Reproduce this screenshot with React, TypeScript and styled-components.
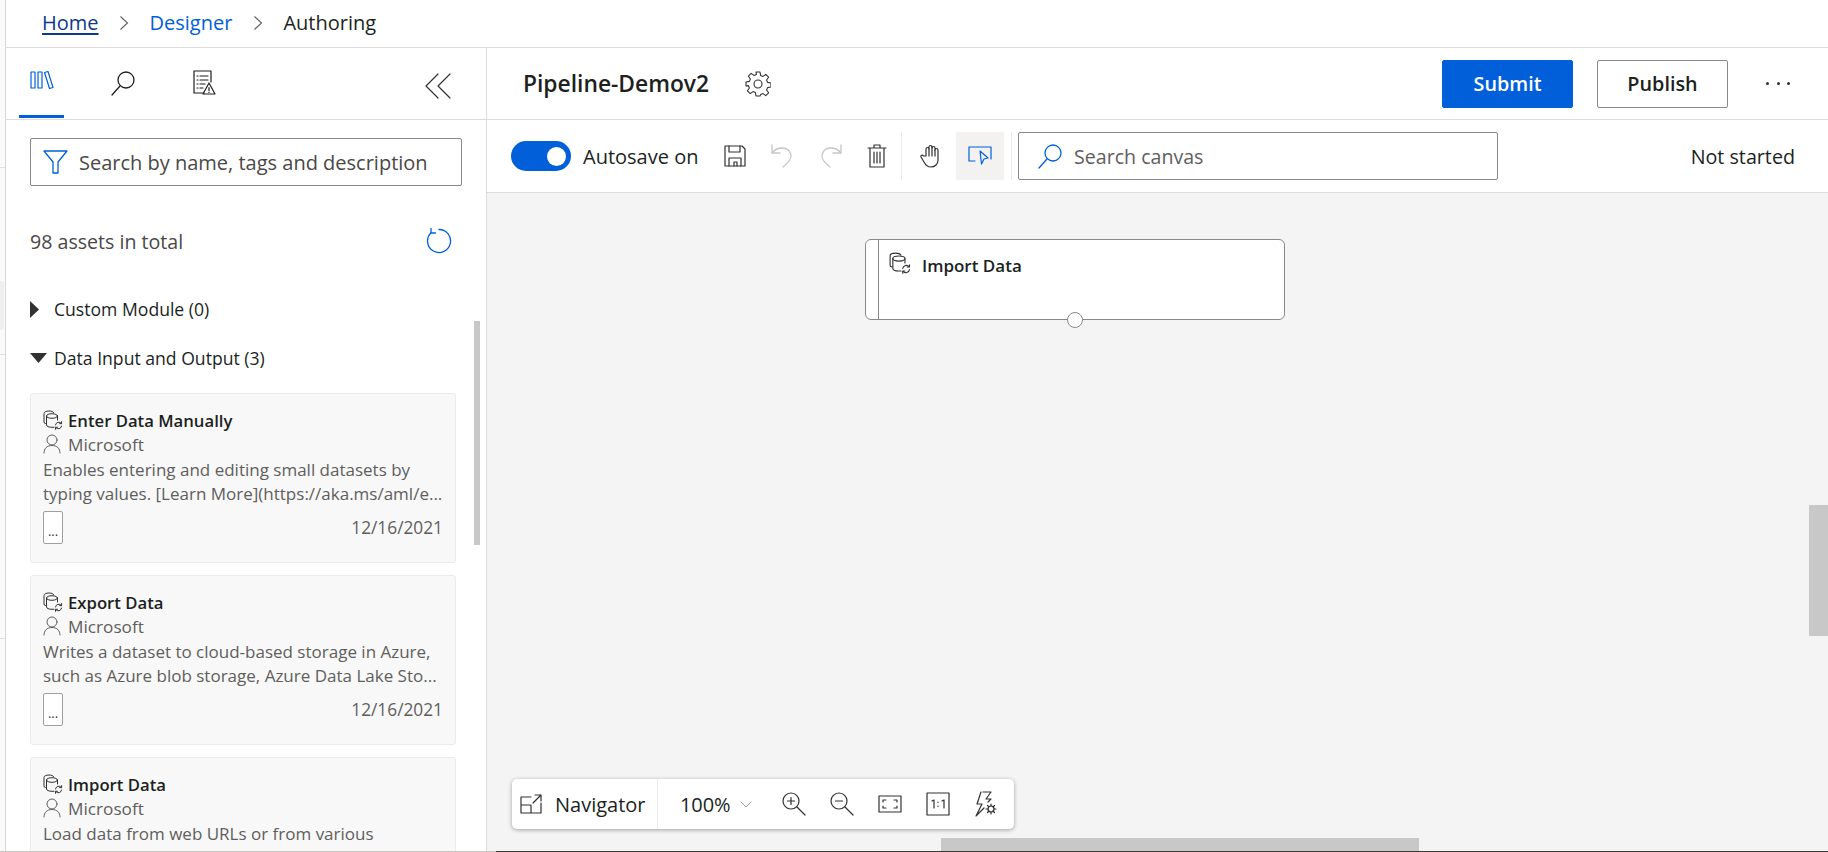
import React from 'react';
import styled, { createGlobalStyle } from 'styled-components';

const GlobalStyle = createGlobalStyle`
  html, body {
    margin: 0;
    padding: 0;
    background: #fff;
  }
  * {
    box-sizing: border-box;
  }
  body {
    font-family: 'Open Sans', 'Noto Sans', 'Liberation Sans', sans-serif;
    color: #201f1e;
  }
`;

const Page = styled.div`
  position: relative;
  display: flex;
  width: 1828px;
  height: 852px;
  overflow: hidden;
  background: #fff;
`;

const LeftStrip = styled.div`
  width: 6px;
  flex: none;
  display: flex;
  flex-direction: column;
  background: #fafafa;
  border-right: 1px solid #d6d6d6;
`;

const StripRule = styled.div<{ $top: number }>`
  height: 1px;
  margin-top: ${(p) => p.$top}px;
  background: #e1dfdd;
`;

const StripBlock = styled.div<{ $top: number }>`
  width: 4px;
  height: 49px;
  margin-top: ${(p) => p.$top}px;
  background: #efefef;
  border-radius: 0 3px 3px 0;
`;

const Main = styled.div`
  flex: 1;
  min-width: 0;
  display: flex;
  flex-direction: column;
`;

const Breadcrumb = styled.nav`
  height: 48px;
  flex: none;
  display: flex;
  align-items: center;
  padding: 0 0 2px 36px;
  border-bottom: 1px solid #dcdcdc;
  font-size: 20px;
`;

const Crumb = styled.a<{ $kind: 'home' | 'link' | 'current' }>`
  color: ${(p) => (p.$kind === 'home' ? '#0b3a8a' : p.$kind === 'link' ? '#0160d9' : '#201f1e')};
  text-decoration: ${(p) => (p.$kind === 'home' ? 'underline' : 'none')};
  text-underline-offset: 3px;
`;

const CrumbChevron = styled.svg`
  width: 10px;
  height: 16px;
  margin: 0 20.5px;
  fill: none;
  stroke: #605e5c;
  stroke-width: 1.1;
`;

const Body = styled.div`
  flex: 1;
  min-height: 0;
  display: flex;
`;

const Sidebar = styled.aside`
  position: relative;
  width: 481px;
  flex: none;
  overflow: hidden;
  border-right: 1px solid #dcdcdc;
`;

const TabRow = styled.div`
  height: 72px;
  display: flex;
  align-items: stretch;
  padding: 0 35px 0 13px;
  border-bottom: 1px solid #dcdcdc;
`;

const Tab = styled.div<{ $active?: boolean }>`
  width: 45px;
  margin-right: 36px;
  display: flex;
  align-items: flex-start;
  justify-content: center;
  padding-top: 22px;
  height: 70px;
  border-bottom: 3px solid ${(p) => (p.$active ? '#0160d9' : 'transparent')};
`;

const Collapse = styled.div`
  margin-left: auto;
  padding-top: 25px;
`;

const SidebarBody = styled.div`
  padding: 18px 30px 0 24px;
`;

const FilterBox = styled.div`
  height: 48px;
  width: 432px;
  display: flex;
  align-items: center;
  gap: 11px;
  padding-left: 12px;
  border: 1px solid #8a8886;
  border-radius: 2px;
  font-size: 20px;
  white-space: nowrap;
  color: #4a4846;
`;

const AssetsRow = styled.div`
  height: 40px;
  margin-top: 35px;
  width: 422px;
  display: flex;
  align-items: center;
  justify-content: space-between;
  font-size: 19.6px;
  color: #4a4846;
`;

const GroupRow = styled.div<{ $gap: number }>`
  height: 24px;
  margin-top: ${(p) => p.$gap}px;
  display: flex;
  align-items: center;
  font-size: 17.6px;
  font-weight: 500;
  color: #201f1e;
`;

const CaretBox = styled.div`
  width: 24px;
  flex: none;
  display: flex;
`;

const CardList = styled.div`
  margin-top: 23px;
  display: flex;
  flex-direction: column;
  gap: 12px;
`;

const Card = styled.div`
  width: 426px;
  height: 170px;
  flex: none;
  padding: 14px 12px 0 12px;
  background: #f8f8f8;
  border: 1px solid #edebe9;
  border-radius: 3px;
`;

const CardLine = styled.div`
  height: 24px;
  display: flex;
  align-items: center;
  gap: 6px;
`;

const CardTitle = styled.span`
  margin-left: -1px;
  font-size: 16.7px;
  font-weight: 600;
  color: #201f1e;
`;

const Owner = styled.span`
  margin-left: 1px;
  font-size: 17.2px;
  color: #605e5c;
`;

const Description = styled.div`
  margin-top: 2px;
  font-size: 17px;
  line-height: 24px;
  color: #605e5c;
  white-space: nowrap;
`;

const CardFoot = styled.div`
  display: flex;
  align-items: center;
  justify-content: space-between;
  margin-top: 5px;
`;

const MoreChip = styled.div`
  width: 20px;
  height: 33px;
  display: flex;
  align-items: center;
  justify-content: center;
  padding-top: 6px;
  background: #fff;
  border: 1px solid #a19f9d;
  border-radius: 2px;
  font-size: 13px;
  color: #323130;
`;

const DateText = styled.span`
  font-size: 17.3px;
  color: #605e5c;
`;

const SidebarThumb = styled.div`
  position: absolute;
  left: 468px;
  top: 273px;
  width: 6px;
  height: 224px;
  background: #c8c8c8;
`;

const Workspace = styled.main`
  flex: 1;
  min-width: 0;
  display: flex;
  flex-direction: column;
`;

const Header = styled.header`
  height: 72px;
  flex: none;
  display: flex;
  align-items: center;
  padding: 0 38px 0 36px;
  border-bottom: 1px solid #dcdcdc;
`;

const PipelineName = styled.h1`
  margin: 0 36px 0 0;
  font-size: 22.8px;
  font-weight: 600;
  color: #201f1e;
`;

const HeaderActions = styled.div`
  margin-left: auto;
  display: flex;
  align-items: center;
  gap: 24px;
`;

const ActionButton = styled.button<{ $primary?: boolean }>`
  width: 131px;
  height: 48px;
  font: inherit;
  font-size: 19.8px;
  font-weight: 600;
  border-radius: 2px;
  color: ${(p) => (p.$primary ? '#fff' : '#201f1e')};
  background: ${(p) => (p.$primary ? '#0160d9' : '#fff')};
  border: 1px solid ${(p) => (p.$primary ? '#0160d9' : '#8a8886')};
`;

const MoreDots = styled.div`
  width: 24px;
  margin-left: 14px;
  display: flex;
  justify-content: space-between;
  span {
    width: 3px;
    height: 3px;
    border-radius: 50%;
    background: #323130;
  }
`;

const Toolbar = styled.div`
  height: 73px;
  flex: none;
  display: flex;
  align-items: center;
  padding: 0 33px 0 24px;
  border-bottom: 1px solid #dcdcdc;
`;

const Toggle = styled.div`
  width: 60px;
  height: 30px;
  padding: 0 5px;
  display: flex;
  align-items: center;
  justify-content: flex-end;
  border-radius: 15px;
  background: #0160d9;
  margin-right: 12px;
  &::after {
    content: '';
    width: 19px;
    height: 19px;
    border-radius: 50%;
    background: #fff;
  }
`;

const ToolLabel = styled.span`
  font-size: 20px;
  color: #201f1e;
  width: 129px;
  white-space: nowrap;
`;

const ToolButton = styled.div<{ $width: number; $active?: boolean }>`
  width: ${(p) => p.$width}px;
  height: 48px;
  display: flex;
  align-items: center;
  justify-content: center;
  border-radius: 2px;
  background: ${(p) => (p.$active ? '#f3f2f1' : 'transparent')};
`;

const ToolDivider = styled.div<{ $left: number; $right: number }>`
  width: 1px;
  height: 48px;
  background: #edebe9;
  margin: 0 ${(p) => p.$right}px 0 ${(p) => p.$left}px;
`;

const CanvasSearch = styled.div`
  width: 480px;
  height: 48px;
  display: flex;
  align-items: center;
  gap: 11px;
  padding-left: 18px;
  border: 1px solid #8a8886;
  border-radius: 2px;
  font-size: 19.6px;
  color: #605e5c;
`;

const RunStatus = styled.span`
  margin-left: auto;
  font-size: 19.7px;
  color: #201f1e;
`;

const Canvas = styled.div`
  position: relative;
  flex: 1;
  min-height: 0;
  background: #f4f4f4;
`;

const Node = styled.div`
  position: absolute;
  left: 378px;
  top: 46px;
  width: 420px;
  height: 81px;
  display: flex;
  padding-left: 12px;
  background: #fff;
  border: 1.5px solid #8a8886;
  border-radius: 6px;
`;

const NodeBody = styled.div`
  flex: 1;
  display: flex;
  align-items: flex-start;
  gap: 11px;
  padding: 12px 0 0 10px;
  border-left: 1.5px solid #8a8886;
  font-size: 17px;
  font-weight: 600;
  line-height: 27px;
  color: #201f1e;
`;

const NodePort = styled.div`
  position: absolute;
  left: 201px;
  bottom: -9px;
  width: 16px;
  height: 16px;
  border-radius: 50%;
  background: #fff;
  border: 1.5px solid #8a8886;
`;

const Navigator = styled.div`
  position: absolute;
  left: 25px;
  bottom: 23px;
  width: 502px;
  height: 50px;
  display: flex;
  align-items: center;
  background: #fff;
  border-radius: 5px;
  box-shadow: 0 1px 4px rgba(0, 0, 0, 0.35);
`;

const NavLabel = styled.div`
  width: 146px;
  height: 100%;
  flex: none;
  display: flex;
  align-items: center;
  gap: 13px;
  padding-left: 8px;
  border-right: 1px solid #edebe9;
  font-size: 20px;
  color: #201f1e;
`;

const ZoomValue = styled.div`
  width: 112px;
  flex: none;
  display: flex;
  align-items: center;
  gap: 10px;
  padding-left: 22px;
  font-size: 20px;
  letter-spacing: -0.1px;
  color: #201f1e;
`;

const NavIcon = styled.div`
  width: 48px;
  flex: none;
  display: flex;
  justify-content: center;
`;

const CanvasThumbV = styled.div`
  position: absolute;
  right: 0;
  top: 312px;
  width: 19px;
  height: 131px;
  background: #c8c8c8;
`;

const CanvasThumbH = styled.div`
  position: absolute;
  left: 454px;
  bottom: 1px;
  width: 478px;
  height: 13px;
  background: #c8c8c8;
`;

const BottomEdge = styled.div`
  position: absolute;
  left: 0;
  right: 0;
  bottom: 0;
  height: 1px;
  background: linear-gradient(to right, #c8c6c4 0 496px, #3b3a39 496px);
`;

const Icon = styled.svg`
  display: block;
  flex: none;
  fill: none;
  stroke-linecap: round;
  stroke-linejoin: round;
`;

const DARK = '#323130';
const BLUE = '#0160d9';

const DatasetIcon = ({ size = 20 }: { size?: number }) => (
  <Icon width={size} height={size} viewBox="0 0 20 20" stroke={DARK} strokeWidth="1">
    <path d="M3 13.5H2.600A1.600 1.600 0 0 1 1 12V3.500C1 2 3 1 6 1c2.400 0 4.200.7 4.800 1.800" />
    <ellipse cx="9" cy="6" rx="5.500" ry="2.300" />
    <path d="M3.500 6v9c0 1.300 2.300 2.300 5.500 2.300h2M14.500 6v4" />
    <path d="M12.500 15a3.300 3.300 0 0 1 5.800-1.600M18.600 16a3.300 3.300 0 0 1-5.800 1.600" />
    <path d="M18.600 11.600v2h-2M12.500 19.300v-2h2" />
  </Icon>
);

const PersonIcon = () => (
  <Icon width={18} height={20} viewBox="0 0 18 20" stroke="#605e5c" strokeWidth="1">
    <circle cx="9" cy="6" r="5" />
    <path d="M1 19c0-4.500 3-7.500 8-7.500s8 3 8 7.500" />
  </Icon>
);

const AssetCard = ({ title, lines }: { title: string; lines: string[] }) => (
  <Card>
    <CardLine>
      <DatasetIcon />
      <CardTitle>{title}</CardTitle>
    </CardLine>
    <CardLine>
      <PersonIcon />
      <Owner>Microsoft</Owner>
    </CardLine>
    <Description>
      {lines.map((l) => (
        <div key={l}>{l}</div>
      ))}
    </Description>
    <CardFoot>
      <MoreChip>...</MoreChip>
      <DateText>12/16/2021</DateText>
    </CardFoot>
  </Card>
);

export default function App() {
  return (
    <Page>
      <GlobalStyle />
      <LeftStrip>
        <StripRule $top={167} />
        <StripBlock $top={113} />
        <StripRule $top={24} />
        <StripRule $top={283} />
      </LeftStrip>
      <Main>
        <Breadcrumb>
          <Crumb $kind="home">Home</Crumb>
          <CrumbChevron viewBox="0 0 10 16"><path d="M1.500 1.500 8.500 8l-7 6.500" /></CrumbChevron>
          <Crumb $kind="link">Designer</Crumb>
          <CrumbChevron viewBox="0 0 10 16"><path d="M1.500 1.500 8.500 8l-7 6.500" /></CrumbChevron>
          <Crumb $kind="current">Authoring</Crumb>
        </Breadcrumb>
        <Body>
          <Sidebar>
            <TabRow>
              <Tab $active>
                <Icon width={24} height={20} viewBox="0 0 24 20" stroke={BLUE} strokeWidth="1.200">
                  <rect x="1" y="2" width="4" height="16" />
                  <rect x="8" y="2" width="4" height="16" />
                  <path d="m14.500 2.500 3.500-1 5 16-3.500 1z" />
                </Icon>
              </Tab>
              <Tab>
                <Icon width={26} height={26} viewBox="0 0 26 26" stroke="#201f1e" strokeWidth="1.300">
                  <circle cx="16" cy="10" r="8" />
                  <path d="M10 16 2 25" />
                </Icon>
              </Tab>
              <Tab>
                <Icon width={24} height={26} viewBox="0 0 24 26" stroke="#201f1e" strokeWidth="1.200">
                  <path d="M12 23H2V1h17v11" />
                  <path d="M5 6h1M8 6h8M5 10h1M8 10h8M5 14h1M8 14h5M5 18h1M8 18h3" />
                  <path d="m17 13 6 11H11z" />
                  <path d="M17 17.500v3M17 22v.4" />
                </Icon>
              </Tab>
              <Collapse>
                <Icon width={26} height={26} viewBox="0 0 26 26" stroke="#323130" strokeWidth="1.200">
                  <path d="M13 1 1 13l12 12M25 1 13 13l12 12" />
                </Icon>
              </Collapse>
            </TabRow>
            <SidebarBody>
              <FilterBox>
                <Icon width={25} height={24} viewBox="0 0 25 24" stroke={BLUE} strokeWidth="1.300">
                  <path d="M1 1h23l-9 11v11h-5V12z" />
                </Icon>
                Search by name, tags and description
              </FilterBox>
              <AssetsRow>
                98 assets in total
                <Icon width={26} height={26} viewBox="0 0 26 26" stroke={BLUE} strokeWidth="1.300">
                  <path d="M13 1.500A11.500 11.500 0 1 1 4.900 4.900" />
                  <path d="M5 .5V5h4.500" />
                </Icon>
              </AssetsRow>
              <GroupRow $gap={36}>
                <CaretBox>
                  <svg width="9" height="17" viewBox="0 0 9 17"><path d="M0 0 9 8.500 0 17z" fill="#323130" /></svg>
                </CaretBox>
                Custom Module (0)
              </GroupRow>
              <GroupRow $gap={25}>
                <CaretBox>
                  <svg width="17" height="10" viewBox="0 0 17 10"><path d="M0 0h17L8.500 10z" fill="#323130" /></svg>
                </CaretBox>
                Data Input and Output (3)
              </GroupRow>
              <CardList>
                <AssetCard
                  title="Enter Data Manually"
                  lines={[
                    'Enables entering and editing small datasets by',
                    'typing values. [Learn More](https://aka.ms/aml/e...',
                  ]}
                />
                <AssetCard
                  title="Export Data"
                  lines={[
                    'Writes a dataset to cloud-based storage in Azure,',
                    'such as Azure blob storage, Azure Data Lake Sto...',
                  ]}
                />
                <AssetCard
                  title="Import Data"
                  lines={['Load data from web URLs or from various', 'cloud-based storage services in Azure, such...']}
                />
              </CardList>
            </SidebarBody>
            <SidebarThumb />
          </Sidebar>
          <Workspace>
            <Header>
              <PipelineName>Pipeline-Demov2</PipelineName>
              <Icon width={26} height={26} viewBox="0 0 26 26" stroke="#323130" strokeWidth="1.100">
                <circle cx="13" cy="13" r="4" />
                <path d="M11 1h4l.6 3.400 2.400 1 2.800-2 2.800 2.800-2 2.800 1 2.400 3.400.6v4l-3.400.6-1 2.400 2 2.800-2.800 2.800-2.800-2-2.400 1L15 25h-4l-.6-3.400-2.400-1-2.800 2-2.800-2.800 2-2.800-1-2.400L1 15v-4l3.400-.6 1-2.400-2-2.800L6.200 2.400l2.800 2 2.400-1z" />
              </Icon>
              <HeaderActions>
                <ActionButton $primary>Submit</ActionButton>
                <ActionButton>Publish</ActionButton>
                <MoreDots><span /><span /><span /></MoreDots>
              </HeaderActions>
            </Header>
            <Toolbar>
              <Toggle />
              <ToolLabel>Autosave on</ToolLabel>
              <ToolButton $width={46}>
                <Icon width={22} height={22} viewBox="0 0 22 22" stroke={DARK} strokeWidth="1.200">
                  <path d="M1 1h17l3 3v17H1z" />
                  <path d="M5 1v6h11V1M5 21v-8h12v8M10 21v-4h3v4" />
                </Icon>
              </ToolButton>
              <ToolButton $width={48}>
                <Icon width={22} height={24} viewBox="0 0 22 24" stroke="#c8c6c4" strokeWidth="1.300">
                  <path d="M1 1v8h8" />
                  <path d="M1 9c4-6 17-8 19 2 .8 4-3 8-8 12" />
                </Icon>
              </ToolButton>
              <ToolButton $width={50}>
                <Icon width={22} height={24} viewBox="0 0 22 24" stroke="#c8c6c4" strokeWidth="1.300">
                  <path d="M21 1v8h-8" />
                  <path d="M21 9C17 3 4 1 2 11c-.8 4 3 8 8 12" />
                </Icon>
              </ToolButton>
              <ToolButton $width={42}>
                <Icon width={20} height={24} viewBox="0 0 20 24" stroke={DARK} strokeWidth="1.200">
                  <path d="M1 4h18M7 4V1h6v3M3 4v19h14V4M7 8v11M10 8v11M13 8v11" />
                </Icon>
              </ToolButton>
              <ToolDivider $left={3} $right={3} />
              <ToolButton $width={51}>
                <Icon width={22} height={24} viewBox="0 0 22 24" stroke={DARK} strokeWidth="1.200">
                  <path d="M6 12V5a1.500 1.500 0 0 1 3 0V3a1.500 1.500 0 0 1 3 0v1a1.500 1.500 0 0 1 3 0v2a1.500 1.500 0 0 1 3 0v10c0 4-3 7-7 7-3 0-5-1-7-5l-3-5c-.6-1.500 1.500-2.500 2.500-1z" />
                  <path d="M9 5v7M12 3v9M15 6v6" />
                </Icon>
              </ToolButton>
              <ToolButton $width={48} $active>
                <Icon width={24} height={22} viewBox="0 0 24 22" stroke={BLUE} strokeWidth="1.200">
                  <path d="M7 16H1V2h22v12" />
                  <path d="m12 6 8 7-4 1-2.500 5z" />
                </Icon>
              </ToolButton>
              <ToolDivider $left={7} $right={6} />
              <CanvasSearch>
                <Icon width={26} height={26} viewBox="0 0 26 26" stroke={BLUE} strokeWidth="1.300">
                  <circle cx="16" cy="10" r="8" />
                  <path d="M10 16 2 25" />
                </Icon>
                Search canvas
              </CanvasSearch>
              <RunStatus>Not started</RunStatus>
            </Toolbar>
            <Canvas>
              <Node>
                <NodeBody>
                  <DatasetIcon size={22} />
                  Import Data
                </NodeBody>
                <NodePort />
              </Node>
              <Navigator>
                <NavLabel>
                  <Icon width={22} height={20} viewBox="0 0 22 20" stroke={DARK} strokeWidth="1.200">
                    <path d="M11 3H1v16h20V9M1 11h10v8M13 9l8-8M15 1h6v6" />
                  </Icon>
                  Navigator
                </NavLabel>
                <ZoomValue>
                  100%
                  <Icon width={12} height={7} viewBox="0 0 12 7" stroke="#a19f9d" strokeWidth="1">
                    <path d="m1 1 5 5 5-5" />
                  </Icon>
                </ZoomValue>
                <NavIcon>
                  <Icon width={24} height={24} viewBox="0 0 24 24" stroke={DARK} strokeWidth="1.200">
                    <circle cx="9" cy="9" r="8" />
                    <path d="m15 15 8 8M9 5.500v7M5.500 9h7" />
                  </Icon>
                </NavIcon>
                <NavIcon>
                  <Icon width={24} height={24} viewBox="0 0 24 24" stroke={DARK} strokeWidth="1.200">
                    <circle cx="9" cy="9" r="8" />
                    <path d="m15 15 8 8M5.500 9h7" />
                  </Icon>
                </NavIcon>
                <NavIcon>
                  <Icon width={24} height={18} viewBox="0 0 24 18" stroke={DARK} strokeWidth="1.200">
                    <rect x="1" y="1" width="22" height="16" />
                    <path d="M5 7V5h3M16 5h3v2M5 11v2h3M16 13h3v-2" />
                  </Icon>
                </NavIcon>
                <NavIcon>
                  <Icon width={24} height={24} viewBox="0 0 24 24" stroke={DARK} strokeWidth="1.200">
                    <rect x="1" y="1" width="22" height="22" />
                    <path d="M6 9l2-1v8M12 10v.4M12 14v.4M16 9l2-1v8" />
                  </Icon>
                </NavIcon>
                <NavIcon>
                  <Icon width={24} height={26} viewBox="0 0 24 26" stroke={DARK} strokeWidth="1.200">
                    <path d="M9 1h8l-5 7h5l-3 3M7 1 3 13h5L2 25l8-8" />
                    <circle cx="17" cy="18" r="3" />
                    <path d="M17 13v2M17 21v2M12 18h2M20 18h2M13.500 14.500l1.400 1.400M19 20l1.500 1.500M13.500 21.500 15 20M19 16l1.500-1.500" />
                  </Icon>
                </NavIcon>
              </Navigator>
              <CanvasThumbV />
              <CanvasThumbH />
            </Canvas>
          </Workspace>
        </Body>
      </Main>
      <BottomEdge />
    </Page>
  );
}
